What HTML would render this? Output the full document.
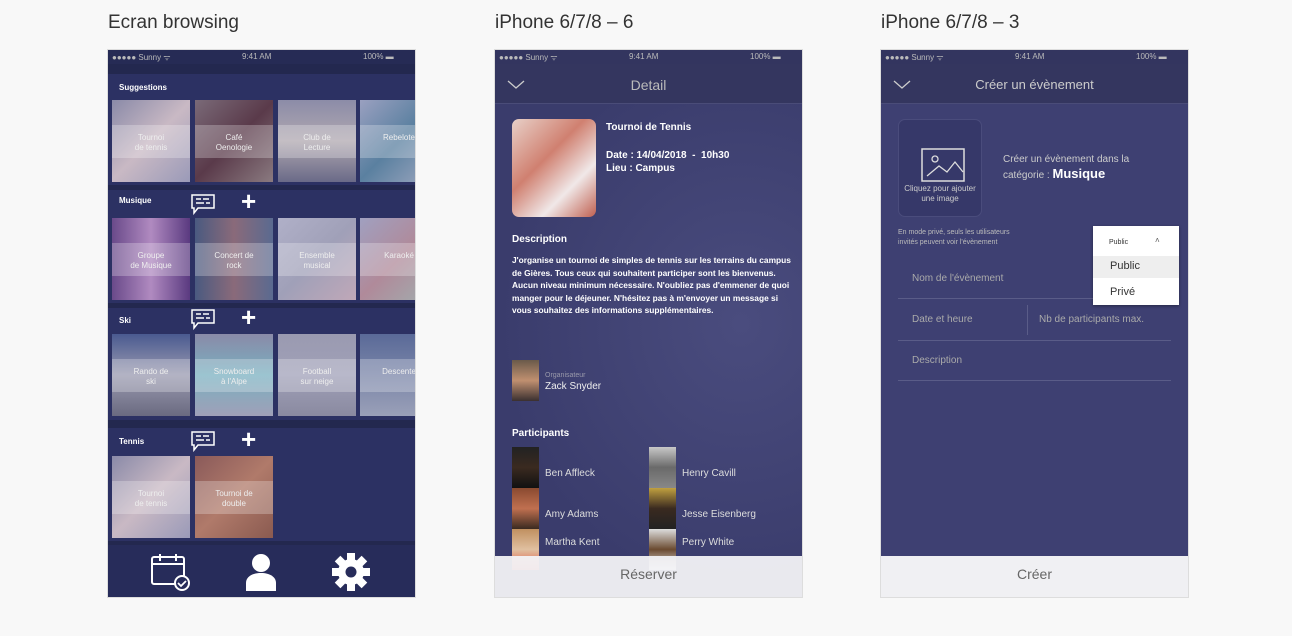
<!DOCTYPE html>
<html><head><meta charset="utf-8"><style>
*{margin:0;padding:0;box-sizing:border-box}
body{width:1292px;height:636px;background:#f8f8f8;font-family:"Liberation Sans",sans-serif;position:relative;overflow:hidden}
.t{position:absolute;top:12px;font-size:19px;color:#333}
.ph{position:absolute;top:50px;width:307px;height:547px;overflow:hidden;outline:1px solid #ddd}
.sb{position:absolute;left:0;top:0;width:100%;height:14px;font-size:8px;color:#bbb}
.sb span{position:absolute;top:2px}
.abs{position:absolute}
.tile{position:absolute;width:78px;height:82px}
.tile .band{position:absolute;left:0;right:0;top:25px;height:33px;background:rgba(255,255,255,.25);color:#eee;font-size:8px;text-align:center;padding-top:8px;line-height:10px}
.sec{position:absolute;left:0;width:100%;background:#2c3163}
.lbl{position:absolute;left:11px;color:#fff;font-size:8px;font-weight:bold}
.w{color:#fff}
</style></head><body>
<div class="t" style="left:108px">Ecran browsing</div>
<div class="t" style="left:495px">iPhone 6/7/8 – 6</div>
<div class="t" style="left:881px">iPhone 6/7/8 – 3</div>

<!-- Phone 1 -->
<div class="ph" style="left:108px;background:#23284f">
 <div class="sb" style="background:#262b55"><span style="left:4px">●●●●● Sunny ᯤ</span><span style="left:134px">9:41 AM</span><span style="left:255px">100% ▬</span></div>
 <div class="sec" style="top:24px;height:111px"></div>
 <div class="lbl" style="top:33px">Suggestions</div>
 <div class="tile" style="left:4px;top:50px;background:linear-gradient(135deg,#8a8aa8,#c9b9c4,#9a9ab8)"><div class="band">Tournoi<br>de tennis</div></div>
 <div class="tile" style="left:87px;top:50px;background:linear-gradient(135deg,#7a6a78,#5a3a4a,#8a7a80)"><div class="band">Café<br>Oenologie</div></div>
 <div class="tile" style="left:170px;top:50px;background:linear-gradient(180deg,#8c8ca8,#b0a8b0,#6a6a88)"><div class="band">Club de<br>Lecture</div></div>
 <div class="tile" style="left:252px;top:50px;background:linear-gradient(135deg,#9aa0c0,#5a80a0,#a0a8c0)"><div class="band">Rebelote</div></div>
 <div class="sec" style="top:140px;height:113px"></div>
 <div class="lbl" style="top:146px">Musique</div>
 <svg class="abs" style="left:82px;top:143px" width="26" height="22" viewBox="0 0 26 22"><path d="M2 2h22v13H8l-4 5v-5H2z" fill="none" stroke="#fff" stroke-width="1.5"/><path d="M6 6h5M13 6h6M6 10h8M16 10h4" stroke="#fff" stroke-width="1.5"/></svg>
 <div class="abs w" style="left:133px;top:136px;font-size:26px;font-weight:bold">+</div>
 <div class="tile" style="left:4px;top:168px;background:linear-gradient(90deg,#6a4a8a,#b08ac0,#5a3a80)"><div class="band">Groupe<br>de Musique</div></div>
 <div class="tile" style="left:87px;top:168px;background:linear-gradient(90deg,#4a5a80,#8a6a7a,#5a6a90)"><div class="band">Concert de<br>rock</div></div>
 <div class="tile" style="left:170px;top:168px;background:linear-gradient(135deg,#b0b0c8,#a0a0b8,#c0a8b8)"><div class="band">Ensemble<br>musical</div></div>
 <div class="tile" style="left:252px;top:168px;background:linear-gradient(135deg,#a0a0c0,#b08a9a,#a0b0b0)"><div class="band">Karaoké</div></div>
 <div class="sec" style="top:258px;height:112px"></div>
 <div class="lbl" style="top:266px">Ski</div>
 <svg class="abs" style="left:82px;top:258px" width="26" height="22" viewBox="0 0 26 22"><path d="M2 2h22v13H8l-4 5v-5H2z" fill="none" stroke="#fff" stroke-width="1.5"/><path d="M6 6h5M13 6h6M6 10h8M16 10h4" stroke="#fff" stroke-width="1.5"/></svg>
 <div class="abs w" style="left:133px;top:252px;font-size:26px;font-weight:bold">+</div>
 <div class="tile" style="left:4px;top:284px;background:linear-gradient(180deg,#4a5a90,#9a9ab0,#6a6a80)"><div class="band">Rando de<br>ski</div></div>
 <div class="tile" style="left:87px;top:284px;background:linear-gradient(180deg,#8a8aa8,#7ab0c0,#a0a0b8)"><div class="band">Snowboard<br>à l'Alpe</div></div>
 <div class="tile" style="left:170px;top:284px;background:linear-gradient(180deg,#9a9ab0,#a0a0b8,#8a8aa0)"><div class="band">Football<br>sur neige</div></div>
 <div class="tile" style="left:252px;top:284px;background:linear-gradient(180deg,#5a6a98,#9aa0b8)"><div class="band">Descente</div></div>
 <div class="sec" style="top:378px;height:113px"></div>
 <div class="lbl" style="top:387px">Tennis</div>
 <svg class="abs" style="left:82px;top:380px" width="26" height="22" viewBox="0 0 26 22"><path d="M2 2h22v13H8l-4 5v-5H2z" fill="none" stroke="#fff" stroke-width="1.5"/><path d="M6 6h5M13 6h6M6 10h8M16 10h4" stroke="#fff" stroke-width="1.5"/></svg>
 <div class="abs w" style="left:133px;top:374px;font-size:26px;font-weight:bold">+</div>
 <div class="tile" style="left:4px;top:406px;background:linear-gradient(135deg,#8a8aa8,#c9b9c4,#9a9ab8)"><div class="band">Tournoi<br>de tennis</div></div>
 <div class="tile" style="left:87px;top:406px;background:linear-gradient(135deg,#8a5a5a,#b07a6a,#8a5a50)"><div class="band">Tournoi de<br>double</div></div>
 <div class="abs" style="left:0;top:495px;width:100%;height:52px;background:#272c5a"></div>
 <svg class="abs" style="left:42px;top:502px" width="42" height="40" viewBox="0 0 42 40"><rect x="2" y="5" width="32" height="27" rx="2" fill="none" stroke="#fff" stroke-width="2"/><path d="M2 12h32M10 2v7M26 2v7" stroke="#fff" stroke-width="2"/><circle cx="32" cy="31" r="7" fill="#272c5a" stroke="#fff" stroke-width="2"/><path d="M28 31l3 3 5-5" fill="none" stroke="#fff" stroke-width="1.8"/></svg>
 <svg class="abs" style="left:136px;top:502px" width="34" height="40" viewBox="0 0 34 40"><circle cx="17" cy="11" r="9" fill="#fff"/><path d="M2 39v-8c0-6 6-10 15-10s15 4 15 10v8z" fill="#fff"/></svg>
 <svg class="abs" style="left:223px;top:502px" width="40" height="40" viewBox="0 0 40 40"><g fill="#fff" transform="translate(20 20)"><circle r="13"/><g id="k"><rect x="-4" y="-19" width="8" height="8"/></g><use href="#k" transform="rotate(45)"/><use href="#k" transform="rotate(90)"/><use href="#k" transform="rotate(135)"/><use href="#k" transform="rotate(180)"/><use href="#k" transform="rotate(225)"/><use href="#k" transform="rotate(270)"/><use href="#k" transform="rotate(315)"/></g><circle cx="20" cy="20" r="5.5" fill="#272c5a"/></svg>
</div>

<!-- Phone 2 -->
<div class="ph" style="left:495px;background:radial-gradient(ellipse at 80% 50%,#4a4c7e,#3a3c6c 70%)">
 <div class="sb" style="background:#33355f"><span style="left:4px">●●●●● Sunny ᯤ</span><span style="left:134px">9:41 AM</span><span style="left:255px">100% ▬</span></div>
 <div class="abs" style="top:14px;left:0;width:100%;height:40px;background:#34365f;border-bottom:1px solid #4a4c78"></div>
 <svg class="abs" style="left:12px;top:30px" width="18" height="10"><path d="M1 1l8 7 8-7" fill="none" stroke="#ccc" stroke-width="1.3"/></svg>
 <div class="abs" style="top:27px;width:100%;text-align:center;color:#bbb;font-size:14px">Detail</div>
 <div class="abs" style="left:17px;top:69px;width:84px;height:98px;border-radius:7px;background:linear-gradient(135deg,#e8d0c8,#d08070 40%,#f0e8e8 70%,#c06050)"></div>
 <div class="abs w" style="left:111px;top:72px;font-size:10px;font-weight:bold">Tournoi de Tennis</div>
 <div class="abs w" style="left:111px;top:99px;font-size:10px;font-weight:bold;line-height:13px">Date : 14/04/2018 &nbsp;- &nbsp;10h30<br>Lieu : Campus</div>
 <div class="abs w" style="left:17px;top:184px;font-size:10px;font-weight:bold">Description</div>
 <div class="abs w" style="left:17px;top:204px;font-size:8.4px;font-weight:bold;line-height:12.6px;width:285px">J'organise un tournoi de simples de tennis sur les terrains du campus de Gières. Tous ceux qui souhaitent participer sont les bienvenus. Aucun niveau minimum nécessaire. N'oubliez pas d'emmener de quoi manger pour le déjeuner. N'hésitez pas à m'envoyer un message si vous souhaitez des informations supplémentaires.</div>
 <div class="abs" style="left:17px;top:310px;width:27px;height:41px;background:linear-gradient(#6a5a4a,#c09070,#3a3030)"></div>
 <div class="abs" style="left:50px;top:322px;font-size:7px;color:#99a">Organisateur</div>
 <div class="abs" style="left:50px;top:331px;font-size:10px;color:#eee">Zack Snyder</div>
 <div class="abs w" style="left:17px;top:378px;font-size:10px;font-weight:bold">Participants</div>
 <div class="abs" style="left:17px;top:397px;width:27px;height:41px;background:linear-gradient(#222,#3a2a20,#111)"></div>
 <div class="abs" style="left:17px;top:438px;width:27px;height:41px;background:linear-gradient(#8a4a30,#c07050,#3a2a20)"></div>
 <div class="abs" style="left:17px;top:479px;width:27px;height:41px;background:linear-gradient(#c09060,#e0c0a0,#e05040)"></div>
 <div class="abs" style="left:154px;top:397px;width:27px;height:41px;background:linear-gradient(#c8c8c8,#6a6a6a,#888)"></div>
 <div class="abs" style="left:154px;top:438px;width:27px;height:41px;background:linear-gradient(#c0a040,#3a2a20,#222)"></div>
 <div class="abs" style="left:154px;top:479px;width:27px;height:41px;background:linear-gradient(#ddd,#6a4a30,#eee)"></div>
 <div class="abs" style="left:50px;top:418px;font-size:10px;color:#ddd">Ben Affleck</div>
 <div class="abs" style="left:50px;top:459px;font-size:10px;color:#ddd">Amy Adams</div>
 <div class="abs" style="left:50px;top:487px;font-size:10px;color:#ddd">Martha Kent</div>
 <div class="abs" style="left:187px;top:418px;font-size:10px;color:#ddd">Henry Cavill</div>
 <div class="abs" style="left:187px;top:459px;font-size:10px;color:#ddd">Jesse Eisenberg</div>
 <div class="abs" style="left:187px;top:487px;font-size:10px;color:#ddd">Perry White</div>
 <div class="abs" style="left:0;top:506px;width:100%;height:41px;background:rgba(242,242,245,.95);text-align:center;color:#666;font-size:14px;padding-top:10px">Réserver</div>
</div>

<!-- Phone 3 -->
<div class="ph" style="left:881px;background:#3e4072">
 <div class="sb" style="background:#33355f"><span style="left:4px">●●●●● Sunny ᯤ</span><span style="left:134px">9:41 AM</span><span style="left:255px">100% ▬</span></div>
 <div class="abs" style="top:14px;left:0;width:100%;height:40px;background:#34365f;border-bottom:1px solid #4a4c78"></div>
 <svg class="abs" style="left:12px;top:30px" width="18" height="10"><path d="M1 1l8 7 8-7" fill="none" stroke="#ccc" stroke-width="1.3"/></svg>
 <div class="abs" style="top:27px;width:100%;text-align:center;color:#ccc;font-size:13px">Créer un évènement</div>
 <div class="abs" style="left:17px;top:69px;width:84px;height:98px;border-radius:7px;background:#363869;border:1px solid #4a4c7c"></div>
 <svg class="abs" style="left:40px;top:98px" width="44" height="34" viewBox="0 0 44 34"><rect x="1" y="1" width="42" height="32" fill="none" stroke="#ddd" stroke-width="1.5"/><circle cx="14" cy="11" r="3" fill="none" stroke="#ddd" stroke-width="1.3"/><path d="M6 28l12-10 8 6 8-10 8 10" fill="none" stroke="#ddd" stroke-width="1.3"/></svg>
 <div class="abs" style="left:12px;top:134px;width:94px;text-align:center;color:#ccc;font-size:8px;line-height:10px">Cliquez pour ajouter<br>une image</div>
 <div class="abs" style="left:122px;top:103px;color:#ccc;font-size:10px;line-height:14px">Créer un évènement dans la<br>catégorie : <b style="color:#fff;font-size:13px">Musique</b></div>
 <div class="abs" style="left:17px;top:178px;color:#bbb;font-size:7px;line-height:10px">En mode privé, seuls les utilisateurs<br>invités peuvent voir l'évènement</div>
 <div class="abs" style="left:31px;top:223px;color:#aaa;font-size:10px">Nom de l'évènement</div>
 <div class="abs" style="left:17px;top:248px;width:273px;height:1px;background:#5a5c88"></div>
 <div class="abs" style="left:31px;top:264px;color:#aaa;font-size:10px">Date et heure</div>
 <div class="abs" style="left:146px;top:255px;width:1px;height:30px;background:#5a5c88"></div>
 <div class="abs" style="left:158px;top:264px;color:#aaa;font-size:10px">Nb de participants max.</div>
 <div class="abs" style="left:17px;top:290px;width:273px;height:1px;background:#5a5c88"></div>
 <div class="abs" style="left:31px;top:305px;color:#aaa;font-size:10px">Description</div>
 <div class="abs" style="left:17px;top:330px;width:273px;height:1px;background:#5a5c88"></div>
 <div class="abs" style="left:212px;top:176px;width:86px;height:79px;background:#fff;box-shadow:0 1px 3px rgba(0,0,0,.4)">
  <div style="position:absolute;left:16px;top:13px;font-size:7px;color:#333">Public</div>
  <div style="position:absolute;left:62px;top:10px;font-size:8px;color:#555">˄</div>
  <div style="position:absolute;left:0;top:30px;width:86px;height:22px;background:#eee;font-size:11px;color:#333;padding:4px 0 0 17px">Public</div>
  <div style="position:absolute;left:17px;top:60px;font-size:11px;color:#333">Privé</div>
 </div>
 <div class="abs" style="left:0;top:506px;width:100%;height:41px;background:#f0f0f3;text-align:center;color:#666;font-size:14px;padding-top:10px">Créer</div>
</div>
</body></html>
